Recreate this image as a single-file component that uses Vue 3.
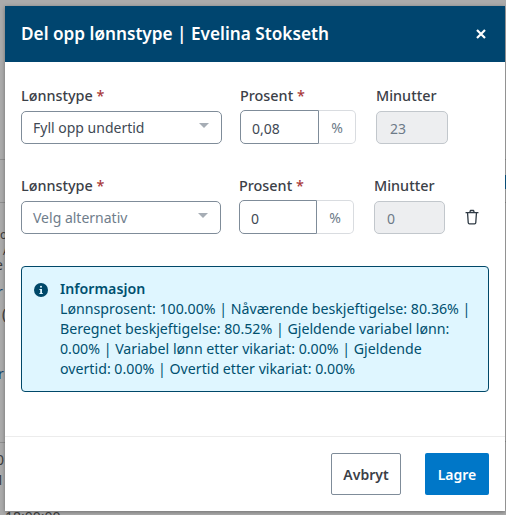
<script setup>
const rows = [
  { id: 1, cls: 'row-a', value: 'Fyll opp undertid', placeholder: false, pct: '0,08', min: '23', del: false },
  { id: 2, cls: 'row-b', value: 'Velg alternativ', placeholder: true, pct: '0', min: '0', del: true }
]
</script>

<template>
  <div class="page">
    <div class="behind">
      <span class="bit b1">o</span>
      <span class="bit b2">A</span>
      <span class="bit b3">e</span>
      <span class="bit b5 blue">r</span>
      <span class="bit b6">(</span>
      <span class="bit b7 blue">r</span>
      <span class="bit b8">0</span>
      <span class="bit b9">1</span>
      <span class="bit b10">18:00:00</span>
      <i class="line l1"></i>
      <i class="line l2"></i>
      <i class="line l3"></i>
      <i class="line l4"></i>
      <i class="line l5"></i>
      <i class="line l6"></i>
      <i class="block"></i>
    </div>
    <section class="modal">
      <header class="head">
        <h1>Del opp lønnstype | Evelina Stokseth</h1>
        <svg class="close" viewBox="0 0 10 10" width="10" height="10" aria-label="Lukk">
          <path d="M1 1 L9 9 M9 1 L1 9" />
        </svg>
      </header>
      <div class="body">
        <div v-for="r in rows" :key="r.id" class="row" :class="r.cls">
          <div class="field f-select">
            <label>Lønnstype <b>*</b></label>
            <div class="select" :class="{ ph: r.placeholder }">
              <span>{{ r.value }}</span>
              <i class="caret"></i>
            </div>
          </div>
          <div class="field f-pct">
            <label>Prosent <b>*</b></label>
            <div class="group">
              <div class="inp">{{ r.pct }}</div>
              <div class="unit">%</div>
            </div>
          </div>
          <div class="field f-min">
            <label>Minutter</label>
            <div class="ro">{{ r.min }}</div>
          </div>
          <button v-if="r.del" class="trash" aria-label="Slett">
            <svg viewBox="0 0 16 18" width="14" height="16">
              <path d="M1.2 4 H14.8 M5.6 3.6 L6.2 1.6 H9.8 L10.4 3.6 M2.9 4.2 L3.7 15.6 Q3.8 16.8 5 16.8 H11 Q12.2 16.8 12.3 15.6 L13.1 4.2" />
            </svg>
          </button>
        </div>
        <div class="info">
          <svg class="info-ic" viewBox="0 0 14 14" width="14" height="14">
            <circle cx="7" cy="7" r="7" fill="#004869" />
            <rect x="6" y="2.8" width="2" height="2" rx="1" fill="#dff6ff" />
            <path d="M5.4 6 H8 V9.9 H8.8 V11 H5.4 V9.9 H6.2 V7.1 H5.4 Z" fill="#dff6ff" />
          </svg>
          <div class="info-text">
            <strong>Informasjon</strong>
            <p>Lønnsprosent: 100.00% | Nåværende beskjeftigelse: 80.36% | Beregnet beskjeftigelse: 80.52% | Gjeldende variabel lønn: 0.00% | Variabel lønn etter vikariat: 0.00% | Gjeldende overtid: 0.00% | Overtid etter vikariat: 0.00%</p>
          </div>
        </div>
      </div>
      <footer class="foot">
        <button class="btn ghost">Avbryt</button>
        <button class="btn primary">Lagre</button>
      </footer>
    </section>
  </div>
</template>

<style scoped>
.page {
  position: relative;
  width: 506px;
  height: 515px;
  overflow: hidden;
  background: #ababab;
  padding: 6px 1px 0 5px;
  box-sizing: border-box;
  font-family: "Noto Sans", sans-serif;
}
.behind { position: absolute; inset: 0; color: #3c3c3c; font-size: 14px; }
.bit { position: absolute; line-height: 12px; }
.blue { color: #17466c; }
.b1 { left: 0; top: 229px; font-size: 12px; }
.b2 { left: 3px; top: 245px; font-size: 10px; }
.b3 { left: -5px; top: 259px; }
.b5 { left: -3px; top: 286px; }
.b6 { left: 2px; top: 308px; }
.b7 { left: -2px; top: 368px; }
.b8 { left: -4px; top: 454px; }
.b9 { left: -4px; top: 474px; }
.b10 { left: 5px; top: 511px; }
.line { position: absolute; height: 1px; background: #8f8f8f; }
.l1 { left: 0; width: 6px; top: 159px; }
.l2 { left: 0; width: 6px; top: 202px; }
.l3 { left: 0; width: 6px; top: 442px; }
.l4 { right: 0; width: 2px; top: 159px; }
.l5 { right: 0; width: 2px; top: 202px; }
.l6 { right: 0; width: 2px; top: 441px; }
.block { position: absolute; right: 0; top: 175px; width: 2px; height: 14px; background: #0b5a8a; }

.modal {
  position: relative;
  width: 500px;
  height: 505px;
  display: flex;
  flex-direction: column;
  background: #fff;
  box-shadow: 0 1px 4px rgba(0, 0, 0, .35);
}
.head {
  height: 56px;
  flex: none;
  background: #00456f;
  color: #fff;
  display: flex;
  align-items: center;
  justify-content: space-between;
  padding: 0 19px 0 16px;
}
h1 { margin: 0; font-size: 17.2px; font-weight: 600; line-height: 24px; }
.close { fill: none; stroke: #fff; stroke-width: 2.2; }

.body { flex: 1; padding: 24px 16px 0; display: flex; flex-direction: column; }
.row { display: flex; height: 58px; margin-bottom: 32px; }
.row-a .f-select { width: 201px; margin-right: 18px; }
.row-a .f-pct { width: 116px; margin-right: 20px; }
.row-a .f-min { width: 72px; }
.row-a .ro { padding-left: 13px; }
.row-b .f-select { width: 200px; margin-right: 18px; }
.row-b .f-pct { width: 115px; margin-right: 20px; }
.row-b .f-min { width: 71px; }
.field { display: flex; flex-direction: column; }
label { font-size: 14.4px; font-weight: 500; line-height: 20px; height: 25px; color: #3b4047; }
label b { color: #a93a3a; font-weight: 500; }
.select, .inp, .ro, .unit { box-sizing: border-box; height: 34px; font-size: 14px; display: flex; align-items: center; }
.select {
  border: 1px solid #7f8c99;
  border-radius: 5px;
  padding: 0 12px 0 11px;
  color: #3f4954;
  position: relative;
  justify-content: space-between;
}
.select.ph { color: #6f7d8b; }
.caret {
  width: 0; height: 0;
  border-left: 5px solid transparent;
  border-right: 5px solid transparent;
  border-top: 5px solid #a6adb5;
  margin: -4px 0 0;
}
.group { display: flex; }
.inp {
  flex: 1;
  border: 1px solid #7f8c99;
  border-radius: 5px 0 0 5px;
  padding: 2px 11px 0;
  color: #3f4954;
}
.unit {
  width: 37px;
  border: 1px solid #d9dce0;
  border-left: 0;
  border-radius: 0 5px 5px 0;
  justify-content: center;
  color: #6d7a88;
}
.ro {
  border: 1px solid #c2c7cc;
  border-radius: 5px;
  background: #edeef0;
  color: #6d7a88;
  padding: 2px 12px 0;
}
.trash {
  margin: 25px 0 0 20px;
  padding: 0;
  border: 0;
  background: none;
  width: 14px;
  height: 32px;
  display: flex;
  align-items: center;
}
.trash path { fill: none; stroke: #2f3a44; stroke-width: 1.5; stroke-linecap: round; stroke-linejoin: round; }

.info {
  box-sizing: border-box;
  height: 126px;
  border: 1px solid #004869;
  border-radius: 4px;
  background: #dff6ff;
  color: #00506f;
  padding: 12px 15px 0 12px;
  display: flex;
  gap: 12px;
  font-size: 14.2px;
  line-height: 20px;
}
.info-ic { flex: none; margin-top: 4px; }
strong { font-weight: 600; display: block; }
p { margin: 0; }

.foot {
  flex: none;
  height: 75px;
  box-sizing: border-box;
  border-top: 1px solid #ececec;
  padding: 16px 16px 0;
  display: flex;
  justify-content: flex-end;
  gap: 24px;
}
.btn {
  height: 42px;
  box-sizing: border-box;
  border-radius: 2px;
  font: 600 14px "Noto Sans", sans-serif;
  padding: 0;
}
.ghost { width: 70px; background: #fff; border: 1px solid #7f8c99; color: #3b4047; }
.primary { width: 64px; background: #0077c8; border: 0; color: #fff; }
</style>
